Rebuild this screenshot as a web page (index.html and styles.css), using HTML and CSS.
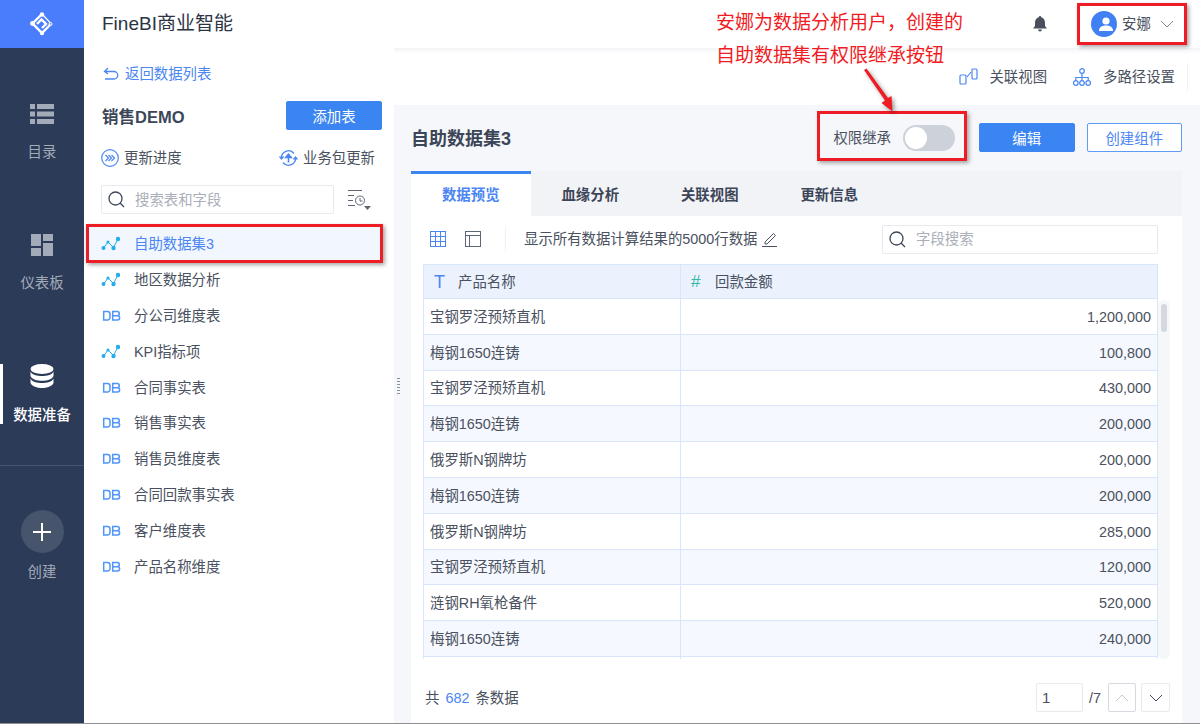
FILE: index.html
```html
<!DOCTYPE html>
<html lang="zh-CN">
<head>
    <meta charset="UTF-8">
    <title>FineBI商业智能</title>
    <link rel="stylesheet" href="styles.css">
</head>
<body>
    <div class="app">
        <nav class="rail">
            <div class="rail-logo">
                <svg width="24" height="24" viewBox="0 0 24 24" fill="none" stroke="#fff" stroke-width="2.400">
                    <path d="M12 2L2.500 11.500L12 21L20.500 12.500"/>
                    <path d="M12 2L20.500 11" stroke-width="1.200"/>
                    <path d="M7 12L11.500 7.500L16 12L12 16"/>
                    <circle cx="12" cy="2.500" r="2.200" fill="#fff" stroke="none"/>
                    <circle cx="2.500" cy="11.500" r="2.400" fill="#fff" stroke="none"/>
                    <circle cx="12" cy="21" r="2.200" fill="#fff" stroke="none"/>
                    <circle cx="20.500" cy="12" r="1.500" fill="none" stroke-width="1"/>
                </svg>
            </div>
            <div class="rail-item rail-catalog">
                <svg width="24" height="20" viewBox="0 0 24 20" fill="#a3aab8">
                    <rect x="0" y="0" width="5" height="5"/><rect x="7" y="0" width="17" height="5"/>
                    <rect x="0" y="7.500" width="5" height="5"/><rect x="7" y="7.500" width="17" height="5"/>
                    <rect x="0" y="15" width="5" height="5"/><rect x="7" y="15" width="17" height="5"/>
                </svg>
                <span>目录</span>
            </div>
            <div class="rail-item rail-board">
                <svg width="22" height="22" viewBox="0 0 22 22" fill="#a3aab8">
                    <rect x="0" y="0" width="10" height="12"/><rect x="12" y="0" width="10" height="7"/>
                    <rect x="0" y="14" width="10" height="8"/><rect x="12" y="9" width="10" height="13"/>
                </svg>
                <span>仪表板</span>
            </div>
            <div class="rail-item rail-data">
                <svg width="24" height="24" viewBox="0 0 24 24" fill="#fff">
                    <ellipse cx="12" cy="5" rx="11.500" ry="5"/>
                    <path d="M.5 7.500C2 11 7 12 12 12s10-1 11.500-4.500V12C22 15.500 17 16.800 12 16.800S2 15.500.5 12z"/>
                    <path d="M.5 14.500C2 18 7 19 12 19s10-1 11.500-4.500V19C22 22.500 17 24 12 24S2 22.500.5 19z"/>
                </svg>
                <span>数据准备</span>
            </div>
            <div class="rail-create">
                <div class="create-circle">
                    <svg width="18" height="18" viewBox="0 0 18 18" stroke="#fff" stroke-width="2"><path d="M9 0V18M0 9H18"/></svg>
                </div>
                <span>创建</span>
            </div>
        </nav>

        <div class="workspace">
            <header class="topbar">
                <div class="brand">FineBI商业智能</div>
                <svg class="bell" width="14" height="16" viewBox="0 0 14 16" fill="#4a4f5c">
                    <path d="M7 0a1.200 1.200 0 0 1 1.200 1.300C10.600 1.900 12 4 12 6.500V10l2 2.500H0L2 10V6.500C2 4 3.400 1.900 5.800 1.300A1.200 1.200 0 0 1 7 0z"/>
                    <path d="M5 13.500h4a2 2 0 0 1-4 0z"/>
                </svg>
                <div class="user">
                    <div class="avatar">
                        <svg width="14" height="14" viewBox="0 0 14 14" fill="#fff">
                            <circle cx="7" cy="4" r="3.600"/><path d="M0 14c0-4 3-5.500 7-5.500s7 1.500 7 5.500z"/>
                        </svg>
                    </div>
                    <span>安娜</span>
                    <svg width="14" height="8" viewBox="0 0 14 8" fill="none" stroke="#8a8f9a"><path d="M1 1l6 6 6-6"/></svg>
                </div>
            </header>

            <div class="panels">
                <aside class="side">
                    <div class="back-link">
                        <svg width="16" height="14" viewBox="0 0 16 14" fill="none" stroke="#4b86f2" stroke-width="1.300">
                            <path d="M5 1L1.500 4.500L5 7M2 4.500H11a3.500 3.500 0 0 1 0 7.500H2"/>
                        </svg>
                        <span>返回数据列表</span>
                    </div>
                    <div class="pack-row">
                        <div class="pack-name">销售DEMO</div>
                        <button class="btn btn-solid">添加表</button>
                    </div>
                    <div class="update-row">
                        <div class="update-link">
                            <svg width="18" height="18" viewBox="0 0 18 18" fill="none" stroke="#4b86f2" stroke-width="1.200">
                                <circle cx="9" cy="9" r="8.300"/><path d="M4.500 6l3 3-3 3M7.500 6l3 3-3 3M10.500 6l3 3-3 3"/>
                            </svg>
                            <span>更新进度</span>
                        </div>
                        <div class="update-link">
                            <svg width="19" height="18" viewBox="0 0 19 18" fill="none" stroke="#4b86f2" stroke-width="1.300">
                                <path d="M2.500 9.500A7 7 0 0 1 15 4.500M16.500 8.500A7 7 0 0 1 4 13.500"/>
                                <path d="M.5 7.500L2.500 10L4.500 7.500M14.500 10.500L16.500 8L18.500 10.500"/>
                                <path d="M9.500 13.500V7" stroke-width="1.600"/>
                                <path d="M6.500 8.500L9.500 5L12.500 8.500z" fill="#4b86f2"/>
                            </svg>
                            <span>业务包更新</span>
                        </div>
                    </div>
                    <div class="search-row">
                        <div class="search-box side-search">
                            <svg class="search-icon" width="17" height="17" viewBox="0 0 17 17" fill="none" stroke="#3c4658" stroke-width="1.300">
                                <circle cx="7.500" cy="7.500" r="6.500"/><path d="M12 12l4 4"/>
                            </svg>
                            <span>搜索表和字段</span>
                        </div>
                        <svg width="25" height="22" viewBox="0 0 25 22" fill="none" stroke="#5d6675">
                            <path d="M1 1.500H15M1 6.500H7M1 11.500H6M1 16.500H8"/>
                            <circle cx="13" cy="11.500" r="4.500"/><path d="M13 9v3h2.500"/>
                            <path d="M17 17h7l-3.500 4z" fill="#5d6675" stroke="none"/>
                        </svg>
                    </div>
                    <ul class="table-list">
                        <li class="table-item is-active"><svg width="20" height="16" viewBox="0 0 20 16"><use href="#etl"/></svg><span>自助数据集3</span></li>
                        <li class="table-item"><svg width="20" height="16" viewBox="0 0 20 16"><use href="#etl"/></svg><span>地区数据分析</span></li>
                        <li class="table-item"><svg width="20" height="16" viewBox="0 0 20 16"><use href="#db"/></svg><span>分公司维度表</span></li>
                        <li class="table-item"><svg width="20" height="16" viewBox="0 0 20 16"><use href="#etl"/></svg><span>KPI指标项</span></li>
                        <li class="table-item"><svg width="20" height="16" viewBox="0 0 20 16"><use href="#db"/></svg><span>合同事实表</span></li>
                        <li class="table-item"><svg width="20" height="16" viewBox="0 0 20 16"><use href="#db"/></svg><span>销售事实表</span></li>
                        <li class="table-item"><svg width="20" height="16" viewBox="0 0 20 16"><use href="#db"/></svg><span>销售员维度表</span></li>
                        <li class="table-item"><svg width="20" height="16" viewBox="0 0 20 16"><use href="#db"/></svg><span>合同回款事实表</span></li>
                        <li class="table-item"><svg width="20" height="16" viewBox="0 0 20 16"><use href="#db"/></svg><span>客户维度表</span></li>
                        <li class="table-item"><svg width="20" height="16" viewBox="0 0 20 16"><use href="#db"/></svg><span>产品名称维度</span></li>
                    </ul>
                </aside>

                <div class="splitter"><i></i></div>

                <main class="content">
                    <div class="toolbar">
                        <div class="tool">
                            <svg class="tool-first" width="19" height="17" viewBox="0 0 19 17" fill="none" stroke="#4b86f2" stroke-width="1.200">
                                <rect x="1" y="7" width="6" height="9" rx="1"/><rect x="13" y="1" width="5" height="10" rx="1"/><path d="M8 9L12 4"/>
                            </svg>
                            <span>关联视图</span>
                        </div>
                        <div class="tool">
                            <svg width="18" height="18" viewBox="0 0 18 18" fill="none" stroke="#4b86f2" stroke-width="1.200">
                                <circle cx="9" cy="3" r="2.300"/><circle cx="2.800" cy="15" r="2.300"/><circle cx="9" cy="15" r="2.300"/><circle cx="15.200" cy="15" r="2.300"/>
                                <path d="M9 5.300V12.700M2.800 12.700V9.500H15.200V12.700"/>
                            </svg>
                            <span>多路径设置</span>
                        </div>
                        <div class="tool-sep"></div>
                    </div>

                    <div class="stage">
                        <div class="stage-head">
                            <h2>自助数据集3</h2>
                            <div class="stage-actions">
                                <div class="inherit">
                                    <span>权限继承</span>
                                    <div class="switch"><i></i></div>
                                </div>
                                <button class="btn btn-solid btn-edit">编辑</button>
                                <button class="btn btn-line">创建组件</button>
                            </div>
                        </div>

                        <div class="card">
                            <div class="tabs">
                                <div class="tab is-active">数据预览</div>
                                <div class="tab">血缘分析</div>
                                <div class="tab">关联视图</div>
                                <div class="tab">更新信息</div>
                            </div>
                            <div class="preview-bar">
                                <svg width="16" height="16" viewBox="0 0 16 16" fill="none" stroke="#4b86f2">
                                    <rect x=".5" y=".5" width="15" height="15"/><path d="M.5 5.500H15.500M.5 10.500H15.500M5.500 .5V15.500M10.500 .5V15.500"/>
                                </svg>
                                <svg class="layout-icon" width="16" height="16" viewBox="0 0 16 16" fill="none" stroke="#5d6675">
                                    <rect x=".5" y=".5" width="15" height="15"/><path d="M.5 4.500H15.500M4.500 4.500V15.500"/>
                                </svg>
                                <div class="bar-sep"></div>
                                <span class="bar-text">显示所有数据计算结果的5000行数据</span>
                                <svg class="pen" width="16" height="16" viewBox="0 0 16 16" fill="none" stroke="#4a5160">
                                    <path d="M3 11L11.500 2.500L13.500 4.500L5 13H3zM0 15.500H15"/>
                                </svg>
                                <div class="search-box field-search">
                                    <svg class="search-icon" width="17" height="17" viewBox="0 0 17 17" fill="none" stroke="#3c4658" stroke-width="1.300">
                                        <circle cx="7.500" cy="7.500" r="6.500"/><path d="M12 12l4 4"/>
                                    </svg>
                                    <span>字段搜索</span>
                                </div>
                            </div>
                            <div class="table-wrap">
                                <div class="grid">
                                    <div class="row row-head">
                                        <div class="cell cell-name"><b class="type type-text">T</b>产品名称</div>
                                        <div class="cell cell-head-num"><b class="type type-num">#</b>回款金额</div>
                                    </div>
                                    <div class="row"><div class="cell cell-name">宝钢罗泾预矫直机</div><div class="cell cell-num">1,200,000</div></div>
                                    <div class="row row-alt"><div class="cell cell-name">梅钢1650连铸</div><div class="cell cell-num">100,800</div></div>
                                    <div class="row"><div class="cell cell-name">宝钢罗泾预矫直机</div><div class="cell cell-num">430,000</div></div>
                                    <div class="row row-alt"><div class="cell cell-name">梅钢1650连铸</div><div class="cell cell-num">200,000</div></div>
                                    <div class="row"><div class="cell cell-name">俄罗斯N钢牌坊</div><div class="cell cell-num">200,000</div></div>
                                    <div class="row row-alt"><div class="cell cell-name">梅钢1650连铸</div><div class="cell cell-num">200,000</div></div>
                                    <div class="row"><div class="cell cell-name">俄罗斯N钢牌坊</div><div class="cell cell-num">285,000</div></div>
                                    <div class="row row-alt"><div class="cell cell-name">宝钢罗泾预矫直机</div><div class="cell cell-num">120,000</div></div>
                                    <div class="row"><div class="cell cell-name">涟钢RH氧枪备件</div><div class="cell cell-num">520,000</div></div>
                                    <div class="row row-alt"><div class="cell cell-name">梅钢1650连铸</div><div class="cell cell-num">240,000</div></div>
                                    <div class="row"><div class="cell cell-name"></div><div class="cell cell-num"></div></div>
                                </div>
                                <div class="scroll-track"><i></i></div>
                            </div>
                            <div class="card-foot">
                                <div class="count">共<em>682</em>条数据</div>
                                <div class="pager">
                                    <div class="page-input">1</div>
                                    <span class="page-total">/7</span>
                                    <div class="page-btn page-up">
                                        <svg width="14" height="8" viewBox="0 0 14 8" fill="none" stroke="#c5c9d1"><path d="M1 7l6-6 6 6"/></svg>
                                    </div>
                                    <div class="page-btn page-down">
                                        <svg width="14" height="8" viewBox="0 0 14 8" fill="none" stroke="#3c4658"><path d="M1 1l6 6 6-6"/></svg>
                                    </div>
                                </div>
                            </div>
                        </div>
                    </div>
                </main>
            </div>
        </div>
    </div>

    <!-- annotations drawn over the screenshot -->
    <div class="note note-text">安娜为数据分析用户，创建的<br>自助数据集有权限继承按钮</div>
    <div class="note mark mark-user"></div>
    <div class="note mark mark-switch"></div>
    <div class="note mark mark-row"></div>
    <svg class="note note-arrow" width="40" height="50" viewBox="0 0 40 50" fill="#ee1c25">
        <path d="M1 3L3.500 1.500L25 31L28.500 29L29.500 44.500L18.500 36L22 33.500Z"/>
    </svg>

    <svg class="defs" width="0" height="0">
        <defs>
            <g id="etl">
                <path d="M2.500 12L7 6L12.500 11.500L17 3" fill="none" stroke="#22aeea" stroke-width="1"/>
                <circle cx="2.500" cy="12" r="2" fill="#22aeea"/>
                <circle cx="7" cy="6" r="1.600" fill="#22aeea"/>
                <circle cx="12.500" cy="12" r="2.200" fill="#22aeea"/>
                <circle cx="17" cy="3" r="2.200" fill="#22aeea"/>
            </g>
            <g id="db" fill="none" stroke="#4f95fb" stroke-width="1.500">
                <path d="M2.700 3.500H6.500A2.500 2.500 0 0 1 9 6V9.500A2.500 2.500 0 0 1 6.500 12H2.700z"/>
                <path d="M11.700 3.500H16.200A2 2 0 0 1 16.200 7.700H11.700zM11.700 7.700H16.500A2.150 2.150 0 0 1 16.500 12H11.700z"/>
            </g>
        </defs>
    </svg>
</body>
</html>
```

FILE: styles.css
```css
* {
    margin: 0;
    padding: 0;
    box-sizing: border-box;
}

body {
    font-family: "Liberation Sans", "Noto Sans CJK SC", sans-serif;
    font-size: 14.4px;
    line-height: 20px;
    color: #4a5160;
    width: 1200px;
    height: 724px;
    overflow: hidden;
    position: relative;
    background: #fff;
}

button {
    font-family: inherit;
}

.app {
    display: flex;
    height: 724px;
    border-bottom: 1px solid #8f9094;
}

/* left rail */
.rail {
    width: 84px;
    flex-shrink: 0;
    background: #2b3b58;
    color: #a3aab8;
    display: flex;
    flex-direction: column;
    align-items: center;
    position: relative;
}

.rail-logo {
    width: 100%;
    height: 48px;
    background: #4a7dfb;
    display: flex;
    align-items: center;
    justify-content: center;
}

.rail-item {
    width: 100%;
    display: flex;
    flex-direction: column;
    align-items: center;
}

.rail-catalog {
    margin-top: 56px;
    gap: 18px;
}

.rail-board {
    margin-top: 72px;
    gap: 17px;
}

.rail-data {
    margin-top: 71px;
    gap: 17px;
    color: #fff;
    position: relative;
    font-weight: 500;
    margin-bottom: 40px;
}

.rail-data::before {
    content: "";
    position: absolute;
    left: 0;
    top: 0;
    width: 3px;
    height: 60px;
    background: #fff;
}

.rail-create {
    width: 100%;
    border-top: 1px solid #47566f;
    padding-top: 44px;
    display: flex;
    flex-direction: column;
    align-items: center;
    gap: 9px;
}

.create-circle {
    width: 43px;
    height: 43px;
    border-radius: 50%;
    background: #46546c;
    display: flex;
    align-items: center;
    justify-content: center;
}

/* header */
.workspace {
    flex: 1;
    display: flex;
    flex-direction: column;
    min-width: 0;
}

.topbar {
    height: 48px;
    flex-shrink: 0;
    display: flex;
    align-items: center;
    padding-left: 18px;
    background: #fff;
}

.brand {
    font-size: 19px;
    line-height: 24px;
    color: #2b3344;
    flex: 1;
}

.bell {
    margin-right: 39px;
}

.user {
    display: flex;
    align-items: center;
    gap: 5px;
    width: 103px;
    padding-left: 5px;
    margin-right: 11px;
}

.avatar {
    width: 26px;
    height: 26px;
    flex-shrink: 0;
    border-radius: 50%;
    background: #3f80f3;
    display: flex;
    align-items: center;
    justify-content: center;
}

.user svg:last-child {
    margin-left: 4px;
    flex-shrink: 0;
}

.panels {
    flex: 1;
    display: flex;
    min-height: 0;
}

/* dataset panel */
.side {
    width: 310px;
    flex-shrink: 0;
    padding: 16px 12px 0 18px;
    background: #fff;
}

.back-link {
    display: flex;
    align-items: center;
    gap: 6px;
    height: 20px;
    padding-left: 1px;
    color: #4b86f2;
}

.pack-row {
    display: flex;
    align-items: center;
    justify-content: space-between;
    margin-top: 17px;
}

.pack-name {
    font-size: 16.5px;
    font-weight: 700;
    color: #3c4658;
    padding-top: 3px;
}

.btn {
    width: 96px;
    height: 29px;
    border-radius: 2px;
    font-size: 14.4px;
    cursor: pointer;
}

.btn-solid {
    background: #3a85f1;
    border: 1px solid #3a85f1;
    color: #fff;
}

.btn-line {
    width: 95.500px;
    background: #fff;
    border: 1px solid #5e9bf5;
    color: #4b86f2;
}

.update-row {
    display: flex;
    justify-content: space-between;
    margin-top: 18px;
    padding-right: 7px;
    margin-left: -1px;
}

.update-link {
    display: flex;
    align-items: center;
    gap: 5px;
    height: 20px;
}

.search-row {
    display: flex;
    align-items: center;
    margin-top: 17px;
    margin-left: -1px;
    gap: 13px;
}

.search-box {
    display: flex;
    align-items: center;
    border: 1px solid #e8eaef;
    border-radius: 2px;
    background: #fff;
    color: #a9aeb8;
    padding-left: 6px;
    gap: 10px;
}

.side-search {
    width: 233px;
    height: 29px;
}

.table-list {
    list-style: none;
    margin-top: 12px;
    margin-left: -18px;
}

.table-item {
    height: 35.8px;
    display: flex;
    align-items: center;
    padding: 1px 0 0 17px;
    gap: 13px;
    color: #4a5160;
}

.table-item.is-active {
    background: #f2f6fe;
    color: #4b86f2;
}

.splitter {
    width: 0;
    position: relative;
}

.splitter i {
    position: absolute;
    left: 3px;
    top: 330px;
    width: 3px;
    height: 16px;
    background: repeating-linear-gradient(#8a909c 0 1px, transparent 1px 3px);
    z-index: 2;
}

/* content */
.content {
    flex: 1;
    min-width: 0;
    display: flex;
    flex-direction: column;
}

.toolbar {
    height: 57px;
    flex-shrink: 0;
    display: flex;
    justify-content: flex-end;
    align-items: center;
    gap: 26px;
    padding-right: 12px;
    background: linear-gradient(#f3f4f7, #fff 6px);
}

.tool {
    display: flex;
    align-items: center;
    gap: 12px;
}

.tool-first {
    margin-right: -1px;
}

.tool-sep {
    width: 1px;
    height: 28px;
    margin-left: -14px;
    background: #eef0f3;
}

.stage {
    flex: 1;
    min-height: 0;
    background: #f6f7fa;
    padding: 0 18px 0 17px;
    display: flex;
    flex-direction: column;
}

.stage-head {
    height: 66px;
    flex-shrink: 0;
    display: flex;
    justify-content: space-between;
    align-items: flex-start;
}

.stage-head h2 {
    font-size: 18px;
    font-weight: 700;
    color: #3c4658;
    line-height: 26px;
    margin-top: 21px;
}

.stage-actions {
    display: flex;
    align-items: center;
    margin-top: 18px;
}

.inherit {
    display: flex;
    align-items: center;
    gap: 12px;
    margin-right: 24px;
}

.switch {
    width: 52px;
    height: 26px;
    border-radius: 13px;
    background: #cdd1d9;
    padding: 2px;
}

.switch i {
    display: block;
    width: 22px;
    height: 22px;
    border-radius: 50%;
    background: #fff;
}

.btn-edit {
    width: 95.500px;
    margin-right: 12px;
}

.card {
    flex: 1;
    min-height: 0;
    background: #fff;
    display: flex;
    flex-direction: column;
}

.tabs {
    height: 45px;
    flex-shrink: 0;
    display: flex;
    background: #f2f3f7;
}

.tab {
    width: 119.500px;
    display: flex;
    align-items: center;
    justify-content: center;
    border-top: 3px solid transparent;
    font-weight: 700;
    color: #3c4658;
}

.tab.is-active {
    background: #fff;
    border-top-color: #3a85f1;
    color: #4b86f2;
}

.preview-bar {
    height: 48px;
    flex-shrink: 0;
    display: flex;
    align-items: center;
    padding: 0 24px 2px 19px;
}

.layout-icon {
    margin-left: 19px;
}

.bar-sep {
    width: 1px;
    height: 24px;
    background: #f0f1f4;
    margin: 0 18px 0 24px;
}

.pen {
    margin-left: 5px;
}

.field-search {
    width: 276px;
    height: 29px;
    margin-left: auto;
}

/* data table */
.table-wrap {
    height: 395px;
    flex-shrink: 0;
    margin-left: 12px;
    display: flex;
    overflow: hidden;
}

.grid {
    width: 735px;
    flex-shrink: 0;
}

.row {
    display: flex;
    height: 35.8px;
}

.row-head {
    height: 35px;
    background: #ebf2fd;
    border-top: 1px solid #d8e6fb;
}

.row-alt {
    background: #f5f8fe;
}

.cell {
    display: flex;
    align-items: center;
    border-left: 1px solid #d8e6fb;
    border-bottom: 1px solid #d8e6fb;
    padding: 1px 6px 0;
}

.cell-name {
    width: 257px;
}

.cell-head-num {
    flex: 1;
    border-right: 1px solid #d8e6fb;
}

.cell-num {
    flex: 1;
    justify-content: flex-end;
    border-right: 1px solid #d8e6fb;
}

.type {
    width: 24px;
    font-weight: 400;
    margin-left: 4px;
}

.type-text {
    color: #4b86f2;
    font-size: 18px;
}

.type-num {
    color: #35b8a5;
    font-size: 17px;
}

.scroll-track {
    width: 12px;
    margin-top: 36px;
    background: #f6f7f9;
    border-radius: 6px;
    padding: 4px 3px;
}

.scroll-track i {
    display: block;
    width: 6px;
    height: 28px;
    border-radius: 3px;
    background: #d5d8de;
}

.card-foot {
    flex: 1;
    display: flex;
    justify-content: space-between;
    align-items: flex-start;
    padding: 29px 12px 0 14px;
}

.count em {
    font-style: normal;
    color: #4b86f2;
    margin: 0 6px;
}

.pager {
    display: flex;
    align-items: center;
    margin-top: -5px;
}

.page-input {
    width: 47px;
    height: 29px;
    border: 1px solid #e8eaef;
    border-radius: 2px;
    padding-left: 5px;
    line-height: 27px;
    font-size: 15px;
}

.page-total {
    margin: 0 7px 0 6px;
}

.page-btn {
    width: 29px;
    height: 29px;
    border: 1px solid #e8eaef;
    border-radius: 2px;
    display: flex;
    align-items: center;
    justify-content: center;
}

.page-up {
    width: 28px;
    border-color: #d6d9df;
}

.page-down {
    margin-left: 5px;
}

/* red annotations */
.note {
    position: absolute;
}

.note-text {
    left: 716px;
    top: 6px;
    font-size: 19px;
    line-height: 33px;
    color: #f01c24;
}

.mark {
    border: 3px solid #ee1c25;
    box-shadow: 2px 2px 4px rgba(0, 0, 0, 0.35);
}

.mark-user {
    left: 1077px;
    top: 3px;
    width: 110px;
    height: 42px;
}

.mark-switch {
    left: 817px;
    top: 111px;
    width: 150px;
    height: 50px;
}

.mark-row {
    left: 86px;
    top: 224px;
    width: 297px;
    height: 39px;
}

.note-arrow {
    left: 863px;
    top: 67px;
    filter: drop-shadow(2px 2px 2px rgba(0, 0, 0, 0.4));
}

.defs {
    position: absolute;
}
```
